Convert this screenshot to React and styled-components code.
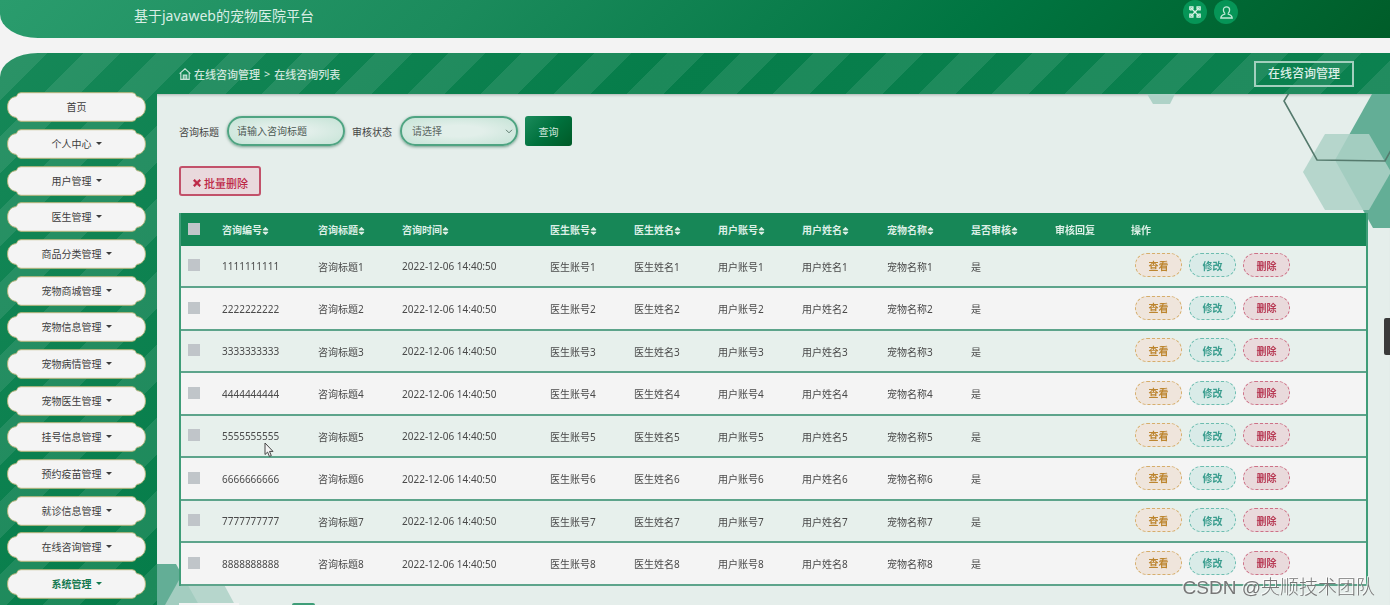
import React, { useState } from 'react'
import styled, { createGlobalStyle } from 'styled-components'
import { FaSort, FaTimes } from 'react-icons/fa'

const menus = [
    "首页", "个人中心", "用户管理", "医生管理", "商品分类管理", "宠物商城管理", "宠物信息管理",
    "宠物病情管理", "宠物医生管理", "挂号信息管理", "预约疫苗管理", "就诊信息管理", "在线咨询管理", "系统管理"
]

const columns = [
    { title: "咨询编号", width: 96 },
    { title: "咨询标题", width: 84 },
    { title: "咨询时间", width: 148 },
    { title: "医生账号", width: 84 },
    { title: "医生姓名", width: 84 },
    { title: "用户账号", width: 84 },
    { title: "用户姓名", width: 85 },
    { title: "宠物名称", width: 84 },
    { title: "是否审核", width: 84 },
    { title: "审核回复", width: 76, noSort: true },
    { title: "操作", noSort: true }
]

const rows = [1, 2, 3, 4, 5, 6, 7, 8].map((n) => ({
    id: n,
    cells: [
        String(n).repeat(10),
        `咨询标题${n}`,
        "2022-12-06 14:40:50",
        `医生账号${n}`,
        `医生姓名${n}`,
        `用户账号${n}`,
        `用户姓名${n}`,
        `宠物名称${n}`,
        "是",
        ""
    ]
}))

export default function App() {

    const [checked, setChecked] = useState([])

    const [title, setTitle] = useState("")

    function toggle(id) {
        if (checked.includes(id)) {
            setChecked(checked.filter((c) => c !== id))
        } else {
            setChecked([...checked, id])
        }
    }

    function toggleAll() {
        setChecked(checked.length === rows.length ? [] : rows.map((r) => r.id))
    }

    return (
        <>
            <GlobalStyle />
            <Header>
                <h1>基于javaweb的宠物医院平台</h1>
                <HeaderTools>
                    <RoundButton aria-label="全屏"><ExpandIcon /></RoundButton>
                    <RoundButton aria-label="用户"><UserIcon /></RoundButton>
                </HeaderTools>
            </Header>
            <Shell>
                <Sidebar>
                    {menus.map((menu, i) =>
                        <MenuButton key={menu} $active={menu === "系统管理"}>
                            <Plaque />
                            <span>{menu}</span>
                            {i > 0 && <Caret />}
                        </MenuButton>
                    )}
                </Sidebar>
                <Main>
                    <TopBar>
                        <Breadcrumb>
                            <HomeIcon />
                            <a href="#list">在线咨询管理</a>
                            <span>&gt;</span>
                            <span>在线咨询列表</span>
                        </Breadcrumb>
                        <PageTag>在线咨询管理</PageTag>
                    </TopBar>
                    <Content>
                        <TopHexagons />
                        <BottomHexagons />
                        <SearchForm onSubmit={(e) => e.preventDefault()}>
                            <label htmlFor="title">咨询标题</label>
                            <TextInput id="title" placeholder="请输入咨询标题" value={title} onChange={(e) => setTitle(e.target.value)} />
                            <label htmlFor="status">审核状态</label>
                            <SelectWrap>
                                <Select id="status" defaultValue="">
                                    <option value="">请选择</option>
                                    <option value="是">是</option>
                                    <option value="否">否</option>
                                </Select>
                                <svg width="8" height="5" viewBox="0 0 8 5"><path d="M1 .8l3 3 3-3" fill="none" stroke="#5c7a6e" /></svg>
                            </SelectWrap>
                            <SearchButton>查询</SearchButton>
                        </SearchForm>
                        <DeleteAll onClick={() => setChecked([])}><FaTimes />批量删除</DeleteAll>
                        <Table>
                            <colgroup>
                                <col width="35" />
                                {columns.map((c) => <col key={c.title} width={c.width} />)}
                            </colgroup>
                            <thead>
                                <tr>
                                    <th><Checkbox aria-label="全选" checked={checked.length === rows.length} onChange={toggleAll} /></th>
                                    {columns.map((c) =>
                                        <th key={c.title}>{c.title}{!c.noSort && <FaSort />}</th>
                                    )}
                                </tr>
                            </thead>
                            <tbody>
                                {rows.map((row) =>
                                    <tr key={row.id}>
                                        <td><Checkbox aria-label={`选择${row.id}`} checked={checked.includes(row.id)} onChange={() => toggle(row.id)} /></td>
                                        {row.cells.map((cell, i) => <td key={i}>{cell}</td>)}
                                        <td>
                                            <Actions>
                                                <ActionButton $color="#bd8630" $line="#d6ae6c" $bg="#efe5dc">查看</ActionButton>
                                                <ActionButton $color="#3a9d8e" $line="#6dbdb0" $bg="#d9ebe8">修改</ActionButton>
                                                <ActionButton $color="#b83c56" $line="#cd7187" $bg="#e9dadc">删除</ActionButton>
                                            </Actions>
                                        </td>
                                    </tr>
                                )}
                            </tbody>
                        </Table>
                        <Pager>
                            <PageSize aria-label="每页条数" />
                            <PageButton aria-label="第一页" />
                        </Pager>
                    </Content>
                </Main>
            </Shell>
            <DrawerHandle aria-label="展开" />
            <Pointer width="10" height="16" viewBox="0 0 10 16">
                <path d="M1 1v11.5l2.6-2.4 1.8 4.3 1.9-.8-1.8-4.2H9z" fill="#f4f4f4" stroke="#444" />
            </Pointer>
            <Watermark>CSDN @央顺技术团队</Watermark>
        </>
    )
}

function Plaque() {
    return (
        <svg viewBox="0 0 139 30" preserveAspectRatio="none">
            <path
                d="M14 .7H125Q128.500 .7 129 3.500Q129.500 5 132 5C136.500 6.500 138.400 10.500 138.400 15S136.500 23.500 132 25Q129.500 25 129 26.500Q128.500 29.300 125 29.300H14Q10.500 29.300 10 26.500Q9.500 25 7 25C2.500 23.500 .6 19.500 .6 15S2.500 6.500 7 5Q9.500 5 10 3.500Q10.500 .7 14 .7Z"
                fill="#f4f4f4"
                stroke="#b9b67c"
            />
        </svg>
    )
}

function ExpandIcon() {
    return (
        <svg width="12" height="12" viewBox="0 0 12 12" fill="none" stroke="#d9f2e6" strokeWidth="1.4">
            <path d="M2 2l8 8M10 2l-8 8" />
            <path d="M.9 3.900V.9h3v2M8.100 2.900v-2h3v3h-2M9.100 8.100h2v3h-3v-2M3.900 9.100v2h-3v-3h2M.9 3.900h2" />
        </svg>
    )
}

function UserIcon() {
    return (
        <svg width="13" height="13" viewBox="0 0 13 13" fill="none" stroke="#bfe8d5" strokeWidth="1.3">
            <path d="M4.800 7.200C3.600 6.200 3.400 4.800 3.400 3.900 3.400 2 4.700 .8 6.500 .8s3.100 1.200 3.100 3.100c0 .9-.2 2.300-1.400 3.300" />
            <path d="M4.800 7.200v.9C3 8.600 1 9.400 .8 12h11.400C12 9.400 10 8.600 8.200 8.100v-.9" />
        </svg>
    )
}

function HomeIcon() {
    return (
        <svg width="12" height="12" viewBox="0 0 12 12" fill="none" stroke="#c4e2d6" strokeWidth="1.200">
            <path d="M.6 5.600L6 .8l5.400 4.800M1.800 4.800v6.600h8.400V4.800M4.300 11.400V7.200h3.400v4.200M6 7.200v4.200" />
        </svg>
    )
}

function TopHexagons() {
    return (
        <TopArt width="250" height="134" viewBox="0 0 250 134">
            <path d="M7 0h28l-5 10H13z" fill="#aed2c7" />
            <path d="M232 0l-37 66 38 68h17V0z" fill="#63ae96" />
            <path d="M185 40h44l22 38-22 38h-44l-22-38z" fill="#aed2c7" fillOpacity=".86" />
            <path d="M149-1l-5 8 33 59 68 1 6-11" fill="none" stroke="#557a6d" strokeWidth="1.600" />
        </TopArt>
    )
}

function BottomHexagons() {
    return (
        <BottomArt width="80" height="41" viewBox="0 0 80 41">
            <path d="M0 0h19l23 41H0z" fill="#63ae96" />
            <path d="M8 41L31 0h25l22 41z" fill="#aed2c7" fillOpacity=".86" />
        </BottomArt>
    )
}

const GlobalStyle = createGlobalStyle`
    * {
        box-sizing: border-box;
    }
    body {
        margin: 0;
        background: #f3f3f3;
    }
    body, button, input, select {
        font-family: "Noto Sans", "Noto Sans CJK SC", sans-serif;
        font-size: 10px;
        color: #444;
    }
    button {
        cursor: pointer;
    }
`

const Header = styled.header`
    display: flex;
    justify-content: space-between;
    height: 38px;
    padding: 0 152px 0 134px;
    border-radius: 0 0 0 38px / 0 0 0 24px;
    background: linear-gradient(135deg, #2a9c6d 0%, #1b8b5c 33%, #007541 70%, #005d29 100%);
    h1 {
        margin: 0;
        font-size: 14px;
        font-weight: 400;
        line-height: 32px;
        color: #d9eee5;
    }
`

const HeaderTools = styled.div`
    display: flex;
    gap: 7px;
`

const RoundButton = styled.button`
    display: flex;
    align-items: center;
    justify-content: center;
    width: 24px;
    height: 24px;
    padding: 0;
    border: 0;
    border-radius: 50%;
    background: #069557;
`

const Shell = styled.div`
    display: flex;
    height: calc(100vh - 53px);
    margin-top: 15px;
    border-radius: 38px 0 0 0 / 24px 0 0 0;
    overflow: hidden;
    background:
        linear-gradient(135deg, rgba(255, 255, 255, .09) 25%, transparent 25%, transparent 50%, rgba(255, 255, 255, .09) 50%, rgba(255, 255, 255, .09) 75%, transparent 75%) 11px 0 / 73px 73px,
        linear-gradient(135deg, #168858 0%, #067d4a 35%, #0f8453 100%);
`

const Sidebar = styled.nav`
    flex: 0 0 157px;
    padding: 39px 11px 0 7px;
    overflow-y: auto;
    scrollbar-width: none;
`

const MenuButton = styled.button`
    position: relative;
    display: flex;
    align-items: center;
    justify-content: center;
    gap: 4px;
    width: 100%;
    height: 30px;
    margin-bottom: 7px;
    padding: 0 0 1px;
    border: 0;
    background: none;
    color: ${(p) => p.$active ? "#14794f" : "#3c3c3c"};
    font-weight: ${(p) => p.$active ? 700 : 400};
    &:nth-child(3n) {
        margin-bottom: 6px;
    }
    svg {
        position: absolute;
        inset: 0;
        width: 100%;
        height: 100%;
    }
    span {
        position: relative;
    }
`

const Caret = styled.i`
    position: relative;
    border: 3px solid transparent;
    border-top-color: currentColor;
    border-bottom: 0;
`

const Main = styled.main`
    flex: 1;
    min-width: 0;
    display: flex;
    flex-direction: column;
`

const TopBar = styled.div`
    display: flex;
    flex-shrink: 0;
    align-items: center;
    justify-content: space-between;
    height: 41px;
    padding: 0 36px 0 22px;
`

const Breadcrumb = styled.div`
    display: flex;
    align-items: center;
    gap: 3px;
    font-size: 11px;
    font-weight: 500;
    color: #cfe6dc;
    a {
        color: inherit;
        text-decoration: none;
    }
    span {
        padding-left: 1px;
    }
`

const PageTag = styled.div`
    padding: 0 12px;
    border: 2px solid #a3cfbe;
    font-size: 12px;
    font-weight: 500;
    line-height: 22px;
    color: #dcefe7;
`

const Content = styled.section`
    position: relative;
    flex: 1;
    min-height: 0;
    padding: 22px 22px 40px;
    overflow-y: auto;
    scrollbar-width: none;
    background: #e5eeeb;
    box-shadow: inset 0 3px 3px -2px rgba(0, 0, 0, .25);
`

const TopArt = styled.svg`
    position: absolute;
    top: 0;
    right: 0;
`

const BottomArt = styled.svg`
    position: fixed;
    left: 157px;
    bottom: 0;
`

const SearchForm = styled.form`
    display: flex;
    align-items: center;
    gap: 7px;
    height: 30px;
    label {
        width: 41px;
        white-space: nowrap;
    }
`

const TextInput = styled.input`
    width: 118px;
    height: 30px;
    padding: 0 8px;
    border: 2px solid #4fa482;
    border-radius: 15px;
    background: radial-gradient(ellipse, #e2efea 30%, #c5e3d6 100%);
    box-shadow: 0 1px 3px rgba(0, 80, 45, .5);
    outline: none;
    &::placeholder {
        color: #4c5a54;
    }
`

const SelectWrap = styled.div`
    position: relative;
    svg {
        position: absolute;
        top: 13px;
        right: 5px;
        pointer-events: none;
    }
`

const Select = styled(TextInput).attrs({ as: "select" })`
    display: block;
    padding: 0 10px;
    appearance: none;
    color: #5c6964;
`

const SearchButton = styled.button`
    width: 47px;
    height: 30px;
    padding: 0;
    border: 0;
    border-radius: 3px;
    background: linear-gradient(135deg, #1b8b5c, #00713d 50%, #005a27);
    color: #d5e9df;
`

const DeleteAll = styled.button`
    position: relative;
    display: flex;
    align-items: center;
    justify-content: center;
    gap: 2px;
    width: 82px;
    height: 30px;
    margin: 20px 0 17px;
    padding: 3px 0 0;
    border: 2px solid #c2516a;
    border-radius: 3px;
    background: #e9d9dd;
    font-size: 11px;
    font-weight: 500;
    color: #bd2746;
    svg {
        width: 10px;
        height: 10px;
        stroke: currentColor;
        stroke-width: 40px;
    }
`

const Table = styled.table`
    position: relative;
    width: 100%;
    table-layout: fixed;
    border-collapse: separate;
    border-spacing: 0;
    border: solid #3f9d78;
    border-width: 0 2px;
    th, td {
        padding: 0 6px;
        text-align: left;
        white-space: nowrap;
    }
    th:first-child, td:first-child {
        padding-left: 7px;
    }
    th {
        height: 33px;
        background: #178757;
        color: #dcefe6;
        svg {
            width: 7px;
            height: 10px;
            vertical-align: -2px;
        }
    }
    td {
        height: 42px;
        border-bottom: 2px solid #5da48b;
        background: #e7f0ec;
        color: #4a4a4a;
    }
    tr:nth-child(even) td {
        height: 43px;
        background: #f4f4f4;
    }
`

const Checkbox = styled.input.attrs({ type: "checkbox" })`
    appearance: none;
    display: block;
    width: 12px;
    height: 12px;
    margin: 0 0 2px;
    background: ${(p) => p.checked ? "#178757" : "#c0c5c9"};
`

const Actions = styled.div`
    display: flex;
    gap: 7px;
    padding: 0 0 2px 4px;
`

const ActionButton = styled.button`
    width: 47px;
    height: 24px;
    padding: 0;
    border: 1px dashed ${(p) => p.$line};
    border-radius: 12px;
    background: ${(p) => p.$bg};
    color: ${(p) => p.$color};
    font-weight: 700;
`

const Pager = styled.div`
    position: relative;
    display: flex;
    gap: 53px;
    margin-top: 17px;
`

const PageSize = styled.select`
    width: 60px;
    height: 24px;
    border: 0;
    background: #f4f4f4;
    appearance: none;
`

const PageButton = styled.button`
    width: 23px;
    height: 24px;
    border: 0;
    border-radius: 2px;
    background: #3f9d78;
`

const DrawerHandle = styled.button`
    position: fixed;
    top: 318px;
    right: 0;
    width: 6px;
    height: 37px;
    padding: 0;
    border: 0;
    border-radius: 2px 0 0 2px;
    background: #3a3a3a;
`

const Pointer = styled.svg`
    position: fixed;
    top: 442px;
    left: 264px;
`

const Watermark = styled.div`
    position: fixed;
    right: 15px;
    bottom: 3px;
    font-family: "Liberation Sans", "Noto Sans CJK SC", sans-serif;
    font-size: 19px;
    font-weight: 300;
    line-height: 28px;
    color: #777;
    text-shadow: -1px -1px 0 rgba(255, 255, 255, .8);
`
